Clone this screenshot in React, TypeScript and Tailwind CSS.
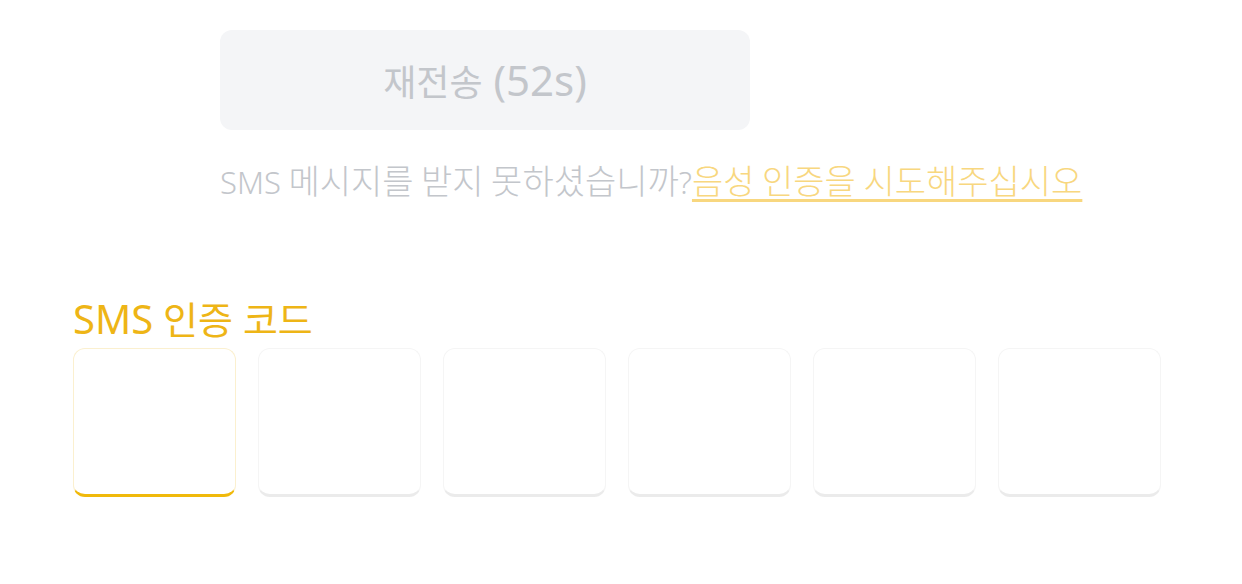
import React from "react";

const font = { fontFamily: '"Noto Sans", "Noto Sans CJK KR", sans-serif' };
const kr = { fontFamily: '"Noto Sans CJK KR", sans-serif' };

export default function App() {
  const boxes = [0, 1, 2, 3, 4, 5];
  return (
    <div className="w-[1242px] h-[584px] bg-white overflow-hidden" style={font}>
      <div className="pt-[30px] pl-[220px]">
        <div className="w-[530px] h-[100px] rounded-[12px] bg-[#f4f5f7] flex items-center justify-center">
          <span className="text-[#c3c6cb] leading-none flex items-baseline">
            <span className="text-[36px] font-normal" style={kr}>재전송</span>
            <span className="text-[42px] font-normal">&nbsp;(52s)</span>
          </span>
        </div>
        <div className="mt-[28px] h-[43px] leading-[43px] font-light text-[#c3c6cb] whitespace-nowrap flex items-baseline">
          <span className="text-[31px]">SMS</span>
          <span className="text-[34px]" style={kr}>&nbsp;메시지를 받지 못하셨습니까</span>
          <span className="text-[31px]">?</span>
          <span
            className="text-[34px] text-[#f8d77f] underline decoration-[2.5px] underline-offset-[5px]"
            style={kr}
          >
            음성 인증을 시도해주십시오
          </span>
        </div>
      </div>
      <div className="pl-[73px] mt-[93px]">
        <div className="h-[49px] leading-[49px] text-[#eeb516] whitespace-nowrap flex items-baseline">
          <span className="text-[40px]">SMS</span>
          <span className="text-[38px]">&nbsp;인증 코드</span>
        </div>
        <div className="mt-[5px] flex gap-[22px]">
          {boxes.map((i) => (
            <div
              key={i}
              className={
                i === 0
                  ? "w-[163px] h-[149px] rounded-[12px] bg-white border border-[#fbf0cf] border-b-[3px] border-b-[#f0b90b]"
                  : "w-[163px] h-[149px] rounded-[12px] bg-white border border-[#f5f5f5] border-b-[3px] border-b-[#ebebeb]"
              }
            />
          ))}
        </div>
      </div>
    </div>
  );
}
